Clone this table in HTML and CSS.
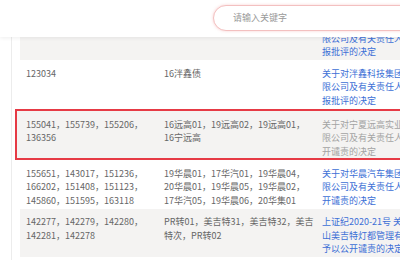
FILE: index.html
```html
<!DOCTYPE html>
<html lang="zh-CN">
<head>
<meta charset="utf-8">
<title>处分决定</title>
<link rel="stylesheet" href="styles.css">
</head>
<body>
<div class="page">
  <header class="topbar">
    <div class="search">请输入关键字</div>
  </header>
  <main class="content">
    <div class="table">
      <div class="row shade">
        <div class="cell code">120871，120872</div>
        <div class="cell name">16泮鑫01</div>
        <div class="cell title link">关于对泮鑫科技集团股份有限公司及有关责任人予以通报批评的决定</div>
      </div>
      <div class="row">
        <div class="cell code">123034</div>
        <div class="cell name">16泮鑫债</div>
        <div class="cell title link">关于对泮鑫科技集团股份有限公司及有关责任人予以通报批评的决定</div>
      </div>
      <div class="row shade selected">
        <div class="cell code">155041，155739，155206，136356</div>
        <div class="cell name">16远高01，19远高02，19远高01，16宁远高</div>
        <div class="cell title muted">关于对宁夏远高实业集团有限公司及有关责任人予以公开谴责的决定</div>
      </div>
      <div class="row">
        <div class="cell code">155651，143017，151236，166202，151408，151123，145860，151595，163118</div>
        <div class="cell name">19华晨01，17华汽01，19华晨04，20华晨01，19华晨05，19华晨02，17华汽05，19华晨06，20华集01</div>
        <div class="cell title link">关于对华晨汽车集团控股有限公司及有关责任人予以公开谴责的决定</div>
      </div>
      <div class="row shade">
        <div class="cell code">142277，142279，142280，142281，142278</div>
        <div class="cell name">PR转01，美吉特31，美吉特32，美吉特次，PR转02</div>
        <div class="cell title link">上证纪2020-21号 关于对江山美吉特灯都管理有限公司予以公开谴责的决定</div>
      </div>
    </div>
  </main>
</div>
</body>
</html>
```
FILE: styles.css
```css
html, body {
  margin: 0;
  padding: 0;
  background: #ffffff;
}
body {
  font-family: "Noto Sans CJK SC", "Noto Sans", sans-serif;
  font-size: 9px;
  color: #666666;
}
.page {
  position: relative;
  width: 400px;
  height: 260px;
  overflow: hidden;
}
.topbar {
  position: absolute;
  top: 0;
  left: 0;
  width: 400px;
  height: 37px;
  background: #ffffff;
  box-shadow: 0 1px 4px rgba(0, 0, 0, 0.07);
  z-index: 2;
  display: flex;
  align-items: flex-start;
  padding: 5px 0 0 213px;
  box-sizing: border-box;
}
.search {
  flex: none;
  width: 220px;
  height: 26px;
  box-sizing: border-box;
  border: 1px solid #f3c0c0;
  border-radius: 13px;
  box-shadow: 0 0 3px rgba(235, 120, 120, 0.35);
  padding-left: 19px;
  line-height: 24px;
  color: #9a9a9a;
  background: #ffffff;
}
.content {
  margin-left: 11px;
  border-left: 1px solid #ececec;
  padding: 11.5px 0 0 8px;
  height: 260px;
  box-sizing: border-box;
}
.table {
  width: 460px;
}
.row {
  display: grid;
  grid-template-columns: 138px 158px 164px;
  padding: 6.5px 0 1.5px;
  line-height: 13.5px;
}
.row.shade {
  background: #f4f3f2;
}
.row.selected {
  margin: 0 -5px;
  padding: 7px 3px 0;
  border: 2px solid #e63a45;
}
.cell {
  padding-left: 6px;
}
.code {
  padding-right: 4px;
}
.name {
  padding-right: 2px;
}
.title {
  width: 108px;
}
.link {
  color: #3c6fd6;
}
.muted {
  color: #a3a3a3;
}
```
